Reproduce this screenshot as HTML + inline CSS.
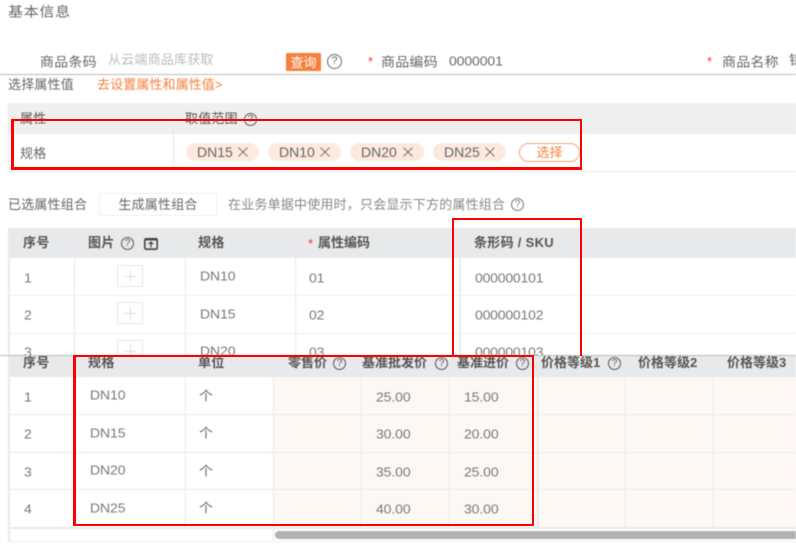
<!DOCTYPE html>
<html lang="zh">
<head>
<meta charset="utf-8">
<title>基本信息</title>
<style>
html,body{margin:0;padding:0;background:#fff}
body{width:796px;height:550px;overflow:hidden;position:relative;font-family:"Liberation Sans","Noto Sans CJK SC",sans-serif;font-size:13px;color:#666}
#p{position:absolute;left:0;top:0;width:796px;height:550px;overflow:hidden;filter:blur(.45px)}
.t{position:absolute;line-height:20px;height:20px;white-space:nowrap;font-size:14px;letter-spacing:.2px;transform:scaleY(.92)}
.c{position:absolute;line-height:20px;height:20px;white-space:nowrap;font-size:13px;letter-spacing:.2px}
.n{position:absolute;line-height:20px;height:20px;white-space:nowrap;font-size:14px;letter-spacing:-.1px;color:#777;transform:scaleY(.92)}
.h{position:absolute;line-height:20px;height:20px;white-space:nowrap;font-size:13px;letter-spacing:.4px;font-weight:700;color:#555}
.b{position:absolute;background:#e9e9e9}
.q{position:absolute;width:13px;height:13px;box-sizing:border-box;border:1.3px solid #555;border-radius:50%;font-size:10px;line-height:11px;text-align:center;color:#555;font-weight:400}
.s{position:absolute;color:#f33;line-height:20px;height:20px}
.tag{position:absolute;top:143px;height:18px;background:#fde9df;border-radius:9px;line-height:18px;font-size:14px;color:#666;white-space:nowrap;box-sizing:border-box;padding-left:11px}
.tag svg{position:absolute;right:11px;top:4px}
.plus{position:absolute;left:117px;width:26px;height:22px;box-sizing:border-box;border:1px solid #e8e8e8}
.plus:before{content:"";position:absolute;left:6px;top:10px;width:12px;height:1px;background:#ddd}
.plus:after{content:"";position:absolute;left:12px;top:4px;width:1px;height:12px;background:#ddd}
.r{position:absolute;border:2px solid #f00;box-sizing:border-box}
</style>
</head>
<body>
<div id="p">
<!-- top form -->
<div class="t" style="left:8px;top:3px;font-size:15px;letter-spacing:.7px">基本信息</div>
<div class="t" style="left:40px;top:52px">商品条码</div>
<div class="c" style="left:108px;top:50px;color:#bbb">从云端商品库获取</div>
<div style="position:absolute;left:286px;top:53px;width:35px;height:18px;background:#f5803e;color:#fff;text-align:center;line-height:19px;border-radius:1px">查询</div>
<div class="q" style="left:327px;top:54px;width:15px;height:15px;line-height:13px;font-size:11px;color:#666;border-color:#666">?</div>
<div class="s" style="left:368px;top:52px">*</div>
<div class="t" style="left:381px;top:52px">商品编码</div>
<div class="n" style="left:449px;top:51px;color:#666">0000001</div>
<div class="s" style="left:707px;top:52px">*</div>
<div class="t" style="left:722px;top:52px">商品名称</div>
<div class="t" style="left:789px;top:50px">银</div>
<div style="position:absolute;left:0;top:74px;width:796px;height:1px;background:#bbb"></div>
<div class="c" style="left:8px;top:75px">选择属性值</div>
<div class="c" style="left:97px;top:75px;color:#f5803e;letter-spacing:.1px">去设置属性和属性值&gt;</div>

<!-- attribute table -->
<div style="position:absolute;left:8px;top:103px;width:788px;height:31px;background:#efefef"></div>
<div class="b" style="left:8px;top:103px;width:1px;height:68px"></div>
<div class="b" style="left:173px;top:103px;width:1px;height:68px"></div>
<div class="b" style="left:8px;top:171px;width:788px;height:1px"></div>
<div class="c" style="left:20px;top:109px;color:#555">属性</div>
<div class="c" style="left:185px;top:109px;color:#555">取值范围</div>
<div class="q" style="left:244px;top:113px">?</div>
<div class="c" style="left:20px;top:144px">规格</div>
<div class="tag" style="left:186px;width:73px">DN15<svg width="10" height="10" viewBox="0 0 10 10"><path d="M.5.5l9 9M9.500.5l-9 9" stroke="#777" stroke-width="1" fill="none"/></svg></div>
<div class="tag" style="left:268px;width:73px">DN10<svg width="10" height="10" viewBox="0 0 10 10"><path d="M.5.5l9 9M9.500.5l-9 9" stroke="#777" stroke-width="1" fill="none"/></svg></div>
<div class="tag" style="left:350px;width:74px">DN20<svg width="10" height="10" viewBox="0 0 10 10"><path d="M.5.5l9 9M9.500.5l-9 9" stroke="#777" stroke-width="1" fill="none"/></svg></div>
<div class="tag" style="left:433px;width:73px">DN25<svg width="10" height="10" viewBox="0 0 10 10"><path d="M.5.5l9 9M9.500.5l-9 9" stroke="#777" stroke-width="1" fill="none"/></svg></div>
<div style="position:absolute;left:519px;top:143px;width:61px;height:19px;box-sizing:border-box;border:1px solid #f5a27a;border-radius:10px;color:#f5803e;text-align:center;line-height:18px">选择</div>

<!-- generate row -->
<div class="c" style="left:8px;top:195px">已选属性组合</div>
<div style="position:absolute;left:99px;top:193px;width:118px;height:23px;box-sizing:border-box;border:1px solid #eee;border-radius:2px;text-align:center;line-height:22px;letter-spacing:.2px">生成属性组合</div>
<div class="c" style="left:228px;top:195px;color:#888">在业务单据中使用时，只会显示下方的属性组合</div>
<div class="q" style="left:511px;top:198px;color:#777;border-color:#777">?</div>

<!-- SKU table -->
<div style="position:absolute;left:8px;top:228px;width:788px;height:30px;background:#e8e9eb"></div>
<div class="b" style="left:8px;top:228px;width:2px;height:127px"></div>
<div class="b" style="left:74px;top:228px;width:1px;height:127px"></div>
<div class="b" style="left:185px;top:228px;width:1px;height:127px"></div>
<div class="b" style="left:295px;top:228px;width:1px;height:127px"></div>
<div class="b" style="left:459px;top:228px;width:2px;height:127px"></div>
<div class="b" style="left:8px;top:295px;width:788px;height:1px;background:#efefef"></div>
<div class="b" style="left:8px;top:333px;width:788px;height:1px;background:#efefef"></div>
<div class="h" style="left:23px;top:233px">序号</div>
<div class="h" style="left:88px;top:233px">图片</div>
<div class="q" style="left:121px;top:237px">?</div>
<svg style="position:absolute;left:144px;top:237px" width="14" height="13" viewBox="0 0 14 13"><rect x=".8" y="1.8" width="12.4" height="10.4" rx="1.5" fill="none" stroke="#444" stroke-width="1.6"/><path d="M1 2.200h12" stroke="#444" stroke-width="2.500"/><path d="M7 10.500V5M4.800 7.200L7 5l2.200 2.200" fill="none" stroke="#444" stroke-width="1.200"/></svg>
<div class="h" style="left:198px;top:233px">规格</div>
<div class="s" style="left:308px;top:234px">*</div>
<div class="h" style="left:318px;top:233px;letter-spacing:0">属性编码</div>
<div class="h" style="left:474px;top:233px;letter-spacing:.3px">条形码 / SKU</div>

<div class="n" style="left:24px;top:268px">1</div>
<div class="plus" style="top:265px"></div>
<div class="n" style="left:200px;top:266px">DN10</div>
<div class="n" style="left:309px;top:268px">01</div>
<div class="n" style="left:475px;top:268px;letter-spacing:-.2px">000000101</div>
<div class="n" style="left:24px;top:305px">2</div>
<div class="plus" style="top:302px"></div>
<div class="n" style="left:200px;top:304px">DN15</div>
<div class="n" style="left:309px;top:305px">02</div>
<div class="n" style="left:475px;top:305px;letter-spacing:-.2px">000000102</div>
<div class="n" style="left:24px;top:342px">3</div>
<div class="plus" style="top:340px"></div>
<div class="n" style="left:200px;top:341px">DN20</div>
<div class="n" style="left:309px;top:342px">03</div>
<div class="n" style="left:475px;top:342px;letter-spacing:-.2px">000000103</div>

<!-- lower panel -->
<div style="position:absolute;left:0;top:355px;width:796px;height:195px;background:#fff"></div>
<div style="position:absolute;left:0;top:355px;width:796px;height:1px;background:#bbb"></div>
<div style="position:absolute;left:9px;top:356px;width:787px;height:21px;background:#e8e9eb"></div>
<div style="position:absolute;left:273px;top:377px;width:523px;height:150px;background:#fef8f4"></div>
<div class="b" style="left:8px;top:356px;width:2px;height:185px"></div>
<div class="b" style="left:74px;top:356px;width:2px;height:171px"></div>
<div class="b" style="left:185px;top:356px;width:1px;height:171px"></div>
<div class="b" style="left:273px;top:356px;width:1px;height:185px"></div>
<div class="b" style="left:361px;top:356px;width:1px;height:171px"></div>
<div class="b" style="left:449px;top:356px;width:1px;height:171px"></div>
<div class="b" style="left:537px;top:356px;width:2px;height:171px"></div>
<div class="b" style="left:625px;top:356px;width:1px;height:171px"></div>
<div class="b" style="left:713px;top:356px;width:1px;height:171px"></div>
<div class="b" style="left:8px;top:414px;width:788px;height:1px"></div>
<div class="b" style="left:8px;top:452px;width:788px;height:1px"></div>
<div class="b" style="left:8px;top:489px;width:788px;height:1px"></div>
<div class="b" style="left:8px;top:527px;width:788px;height:2px"></div>
<div class="b" style="left:8px;top:541px;width:788px;height:1px;background:#f0f0f0"></div>
<div style="position:absolute;left:275px;top:531px;width:530px;height:8px;border-radius:4px;background:#b2b2b2"></div>

<div class="h" style="left:23px;top:353px">序号</div>
<div class="h" style="left:88px;top:353px">规格</div>
<div class="h" style="left:198px;top:353px">单位</div>
<div class="h" style="left:288px;top:353px;letter-spacing:0">零售价</div>
<div class="q" style="left:333px;top:357px">?</div>
<div class="h" style="left:362px;top:353px;letter-spacing:0">基准批发价</div>
<div class="q" style="left:435px;top:357px">?</div>
<div class="h" style="left:457px;top:353px;letter-spacing:0">基准进价</div>
<div class="q" style="left:516px;top:357px">?</div>
<div class="h" style="left:541px;top:353px;letter-spacing:0">价格等级1</div>
<div class="q" style="left:608px;top:357px">?</div>
<div class="h" style="left:638px;top:353px;letter-spacing:0">价格等级2</div>
<div class="h" style="left:727px;top:353px;letter-spacing:0">价格等级3</div>

<div class="n" style="left:24px;top:387px">1</div><div class="n" style="left:90px;top:385px">DN10</div><div class="t" style="left:199px;top:386px">个</div><div class="n" style="left:376px;top:387px">25.00</div><div class="n" style="left:464px;top:387px">15.00</div>
<div class="n" style="left:24px;top:424px">2</div><div class="n" style="left:90px;top:423px">DN15</div><div class="t" style="left:199px;top:423px">个</div><div class="n" style="left:376px;top:424px">30.00</div><div class="n" style="left:464px;top:424px">20.00</div>
<div class="n" style="left:24px;top:462px">3</div><div class="n" style="left:90px;top:460px">DN20</div><div class="t" style="left:199px;top:461px">个</div><div class="n" style="left:376px;top:462px">35.00</div><div class="n" style="left:464px;top:462px">25.00</div>
<div class="n" style="left:24px;top:499px">4</div><div class="n" style="left:90px;top:498px">DN25</div><div class="t" style="left:199px;top:498px">个</div><div class="n" style="left:376px;top:499px">40.00</div><div class="n" style="left:464px;top:499px">30.00</div>
</div>

<!-- red annotations -->
<div class="r" style="left:11px;top:119px;width:571px;height:51px;border-width:2px 2px 3px 3px"></div>
<div class="r" style="left:452px;top:218px;width:130px;height:138px;border-bottom:0;border-width:2px 2px 0 2px"></div>
<div class="r" style="left:73px;top:355px;width:461px;height:171px;border-width:2px 2px 2px 3px"></div>
</body>
</html>
